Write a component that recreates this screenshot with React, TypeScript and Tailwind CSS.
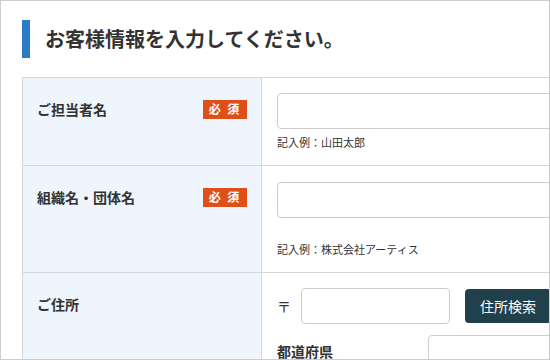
const font = "font-['Noto_Sans_CJK_JP','Noto_Sans',sans-serif]";

function Badge() {
  return (
    <span className="inline-flex items-center justify-center w-[44px] h-[19px] bg-[#df4f17] text-white text-[12px] font-bold leading-none tracking-[2px]">
      必 須
    </span>
  );
}

function Label({ text, required }: { text: string; required?: boolean }) {
  return (
    <div className="w-[239px] shrink-0 bg-[#eff5fc] border-r border-[#d6d6d6] pl-[14px] pr-[14px] pt-5">
      <div className="flex items-center justify-between h-[22px]">
        <span className="text-[14px] font-bold leading-[22px] text-[#333]">{text}</span>
        {required && <Badge />}
      </div>
    </div>
  );
}

function TextInput({ width = "w-[420px]" }: { width?: string }) {
  return <div className={`${width} h-[36px] bg-white border border-[#cccccc] rounded-[4px] shrink-0`} />;
}

export default function App() {
  return (
    <div className={`w-[550px] h-[360px] border border-[#cccccc] overflow-hidden bg-white ${font}`}>
      <div className="pl-[21px] pt-[19px]">
        <h2 className="flex items-center h-[38px] border-l-[8px] border-[#2a7bc6] pl-[15px] text-[20px] font-bold text-[#333] leading-none">
          お客様情報を入力してください。
        </h2>

        <div className="mt-[19px] w-[700px] border-t border-l border-[#d6d6d6]">
          <div className="flex border-b border-[#d6d6d6]">
            <Label text="ご担当者名" required />
            <div className="pl-[15px] pt-[15px] pb-[15px]">
              <TextInput />
              <p className="mt-[5px] text-[11px] leading-4 text-[#333]">記入例：山田太郎</p>
            </div>
          </div>

          <div className="flex border-b border-[#d6d6d6]">
            <Label text="組織名・団体名" required />
            <div className="pl-[15px] pt-4 pb-[15px]">
              <TextInput />
              <p className="mt-[23px] text-[11px] leading-4 text-[#333]">記入例：株式会社アーティス</p>
            </div>
          </div>

          <div className="flex h-[200px]">
            <Label text="ご住所" />
            <div className="pl-[15px] pt-[15px]">
              <div className="flex items-center">
                <span className="w-[24px] text-[14px] text-[#333]">〒</span>
                <TextInput width="w-[149px]" />
                <button className="ml-[15px] h-[34px] px-[15px] bg-[#20404b] text-white text-[14px] rounded-[4px] leading-none">
                  住所検索
                </button>
              </div>
              <div className="flex items-start mt-[11px]">
                <span className="w-[151px] mt-[6px] text-[14px] font-bold leading-5 text-[#333]">都道府県</span>
                <TextInput width="w-[200px]" />
              </div>
            </div>
          </div>
        </div>
      </div>
    </div>
  );
}
